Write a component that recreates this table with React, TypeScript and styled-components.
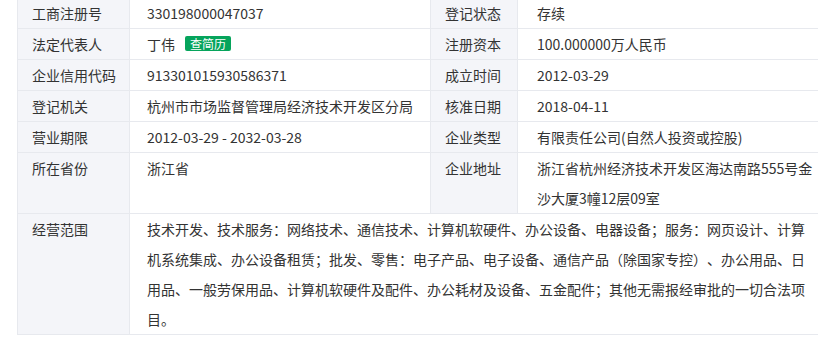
import { createGlobalStyle, styled } from "styled-components";

const GlobalStyle = createGlobalStyle`
  html, body {
    margin: 0;
    padding: 0;
    background: #fff;
    overflow: hidden;
  }
  body {
    font-family: "Noto Sans CJK SC", "Noto Sans", sans-serif;
  }
`;

const Wrap = styled.div`
  margin-top: -3px;
  padding-left: 17px;
  width: 830px;
`;

const Table = styled.table`
  width: 817px;
  border-collapse: collapse;
  table-layout: fixed;
  font-size: 14px;
  color: #333;
  text-spacing-trim: space-all;
`;

const Label = styled.td`
  background: #f4f5f9;
  border: 1px solid #e7e9ee;
  padding: 0 0 0 14px;
  line-height: 30px;
  vertical-align: top;
  white-space: nowrap;
`;

const Value = styled.td<{ $pl?: number; $nowrap?: boolean }>`
  border: 1px solid #e7e9ee;
  padding: 0 18px 0 ${(p) => p.$pl ?? 17}px;
  line-height: 30px;
  vertical-align: top;
  word-break: break-all;
  white-space: ${(p) => (p.$nowrap ? "nowrap" : "normal")};
`;

const Badge = styled.span`
  display: inline-block;
  margin-left: 10px;
  padding: 0 5px;
  height: 15px;
  line-height: 15px;
  font-size: 12px;
  color: #fff;
  background: #06a45c;
  border-radius: 2px;
  vertical-align: 1px;
`;

const rows: [string, React.ReactNode, string, string][] = [
  ["工商注册号", "330198000047037", "登记状态", "存续"],
  [
    "法定代表人",
    <>
      丁伟<Badge>查简历</Badge>
    </>,
    "注册资本",
    "100.000000万人民币",
  ],
  ["企业信用代码", "913301015930586371", "成立时间", "2012-03-29"],
  ["登记机关", "杭州市市场监督管理局经济技术开发区分局", "核准日期", "2018-04-11"],
  ["营业期限", "2012-03-29 - 2032-03-28", "企业类型", "有限责任公司(自然人投资或控股)"],
  ["所在省份", "浙江省", "企业地址", "浙江省杭州经济技术开发区海达南路555号金沙大厦3幢12层09室"],
];

const scope =
  "技术开发、技术服务：网络技术、通信技术、计算机软硬件、办公设备、电器设备；服务：网页设计、计算机系统集成、办公设备租赁；批发、零售：电子产品、电子设备、通信产品（除国家专控）、办公用品、日用品、一般劳保用品、计算机软硬件及配件、办公耗材及设备、五金配件；其他无需报经审批的一切合法项目。";

const App = () => {
  return (
    <Wrap>
      <GlobalStyle />
      <Table>
        <colgroup>
          <col style={{ width: 112 }} />
          <col style={{ width: 301 }} />
          <col style={{ width: 87 }} />
          <col />
        </colgroup>
        <tbody>
          {rows.map(([l1, v1, l2, v2]) => (
            <tr key={l1}>
              <Label>{l1}</Label>
              <Value $nowrap>{v1}</Value>
              <Label>{l2}</Label>
              <Value $pl={19}>{v2}</Value>
            </tr>
          ))}
          <tr>
            <Label>经营范围</Label>
            <Value colSpan={3}>{scope}</Value>
          </tr>
        </tbody>
      </Table>
    </Wrap>
  );
};

export default App;
